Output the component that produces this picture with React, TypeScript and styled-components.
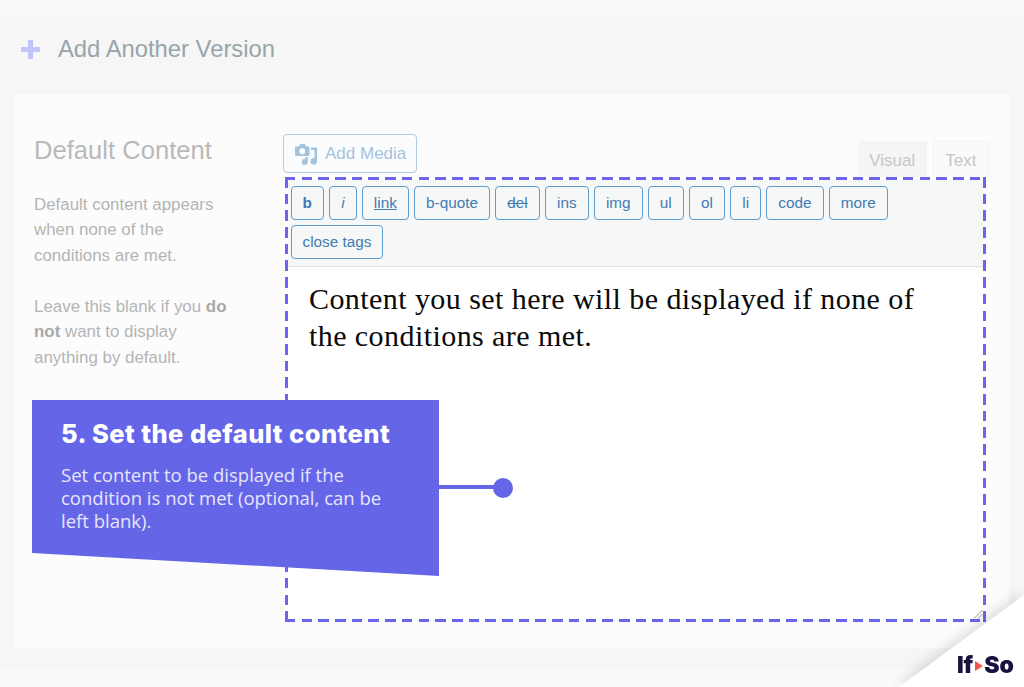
import React from 'react';
import styled, { createGlobalStyle } from 'styled-components';

const GlobalStyle = createGlobalStyle`
  html, body {
    margin: 0;
    padding: 0;
    height: 100%;
    overflow: hidden;
    background: #fafafa;
    font-family: "Liberation Sans", Arial, sans-serif;
  }
`;

const QUICKTAGS = ['b', 'i', 'link', 'b-quote', 'del', 'ins', 'img', 'ul', 'ol', 'li', 'code', 'more', 'close tags'];

const DASH = '#6b64f2 0 10.5px, transparent 10.5px 16.7px';

const Page = styled.div`
  position: relative;
  width: 1024px;
  height: 687px;
  overflow: hidden;
  padding-top: 17px;
  box-sizing: border-box;
`;

const Shell = styled.div`
  height: 652px;
  background: #f6f6f6;
  padding: 0 15px 0 14px;
  box-sizing: border-box;
`;

const AddVersion = styled.div`
  height: 78px;
  display: flex;
  align-items: center;
  gap: 18px;
  padding: 0 0 14px 7px;
  box-sizing: border-box;
  font-size: 23.8px;
  color: #97a5aa;
`;

const Card = styled.section`
  height: 553px;
  background: #fcfcfc;
  box-sizing: border-box;
  padding: 39px 20px 0 20px;
  display: grid;
  grid-template-columns: 249px 1fr;
`;

const Side = styled.div`
  color: #b4b4b4;
  font-size: 16.9px;
  line-height: 25.5px;
`;

const SideTitle = styled.h2`
  margin: 0 0 25.5px;
  font-size: 25.6px;
  font-weight: 400;
  line-height: 32px;
  color: #b9b9b9;
`;

const SideText = styled.p`
  margin: 0 0 25.5px;
  b {
    color: #a9a9a9;
  }
`;

const EditorColumn = styled.div`
  display: flex;
  flex-direction: column;
`;

const EditorHead = styled.div`
  height: 43px;
  display: flex;
  justify-content: space-between;
`;

const MediaButton = styled.button`
  width: 134px;
  height: 39px;
  display: flex;
  align-items: center;
  gap: 8px;
  padding: 0 0 0 11px;
  background: #fbfcfd;
  border: 1px solid #abcde5;
  border-radius: 4px;
  box-sizing: border-box;
  font: 17px "Liberation Sans", Arial, sans-serif;
  color: #a6c3dc;
`;

const Tabs = styled.div`
  display: flex;
  align-items: flex-end;
  gap: 6px;
`;

const Tab = styled.div<{ $active?: boolean }>`
  height: 36px;
  padding: 2px ${(p) => (p.$active ? 10.5 : 11.5)}px 0;
  display: flex;
  align-items: center;
  box-sizing: border-box;
  font-size: 17px;
  color: #c6c6c6;
  background: ${(p) => (p.$active ? '#f5f5f5' : '#fafafa')};
  border: 1px solid #f4f4f4;
  border-bottom: 0;
`;

const Editor = styled.div`
  height: 445px;
  margin: 0 3px 0 2px;
  padding: 3px;
  box-sizing: border-box;
  background: #fff;
  position: relative;
  &::after {
    content: '';
    position: absolute;
    inset: 0;
    pointer-events: none;
    background-image:
      repeating-linear-gradient(90deg, ${DASH}),
      repeating-linear-gradient(90deg, ${DASH}),
      repeating-linear-gradient(180deg, ${DASH}),
      repeating-linear-gradient(180deg, ${DASH});
    background-size: 100% 3px, 100% 3px, 3px 100%, 3px 100%;
    background-position: 0 0, 0 100%, 0 0, 100% 0;
    background-repeat: no-repeat;
  }
`;

const Toolbar = styled.div`
  height: 87px;
  box-sizing: border-box;
  padding: 6px 90px 0 2.5px;
  background: #f6f7f7;
  border-bottom: 1px solid #dfe0e0;
  display: flex;
  flex-wrap: wrap;
  align-content: flex-start;
  gap: 5px 5.3px;
`;

const TagButton = styled.button<{ $tag: string }>`
  height: 34px;
  padding: 0 11px;
  min-width: ${(p) => (p.$tag === 'b' ? 33 : p.$tag === 'i' ? 27 : 0)}px;
  background: #f6f7f7;
  border: 1px solid #5c9dcf;
  border-radius: 4px;
  box-sizing: border-box;
  font-family: "Liberation Sans", Arial, sans-serif;
  font-size: 15.3px;
  color: #3f7cb3;
  font-weight: ${(p) => (p.$tag === 'b' ? 700 : 400)};
  font-style: ${(p) => (p.$tag === 'i' ? 'italic' : 'normal')};
  text-decoration: ${(p) => (p.$tag === 'link' ? 'underline' : p.$tag === 'del' ? 'line-through' : 'none')};
`;

const EditorText = styled.div`
  padding: 13px 40px 0 21px;
  font-family: "Liberation Serif", "Times New Roman", serif;
  font-size: 30px;
  letter-spacing: 0.43px;
  line-height: 37px;
  color: #0a0a0a;
`;

const ResizeHandle = styled.svg`
  position: absolute;
  right: 3px;
  bottom: 3px;
`;

const Callout = styled.aside`
  position: absolute;
  left: 32px;
  top: 400px;
  width: 482px;
  height: 176px;
`;

const CalloutBody = styled.div`
  width: 407px;
  height: 176px;
  box-sizing: border-box;
  padding: 18px 30px 0 29px;
  background: #6565e8;
  clip-path: polygon(0 0, 100% 0, 100% 100%, 0 153px);
  color: #fff;
`;

const CalloutTitle = styled.h3`
  margin: 0 0 13px;
  font-family: Inter, "Noto Sans", sans-serif;
  font-weight: 800;
  font-size: 25.5px;
  line-height: 32px;
  letter-spacing: 0.45px;
`;

const CalloutText = styled.p`
  margin: 0;
  font-family: "Open Sans", "Noto Sans", sans-serif;
  font-size: 18.5px;
  line-height: 23px;
  color: #e6e6fb;
`;

const Connector = styled.div`
  position: absolute;
  left: 407px;
  top: 85px;
  width: 60px;
  height: 4px;
  background: #6565e8;
  &::after {
    content: '';
    position: absolute;
    right: -14px;
    top: -7px;
    width: 20px;
    height: 20px;
    border-radius: 50%;
    background: #6565e8;
  }
`;

const CornerFold = styled.div`
  position: absolute;
  right: 0;
  bottom: 0;
  width: 125px;
  height: 92px;
  filter: drop-shadow(-3px -3px 6px rgba(0, 0, 0, 0.12));
`;

const CornerPaper = styled.div`
  width: 100%;
  height: 100%;
  background: #fff;
  clip-path: polygon(100% 0, 100% 100%, 0 100%);
`;

const Logo = styled.div`
  position: absolute;
  right: 10px;
  bottom: 10px;
  display: flex;
  align-items: center;
  font-family: Inter, "Noto Sans", sans-serif;
  font-weight: 900;
  font-size: 23px;
  line-height: 24px;
  color: #1b1140;
`;

const LogoArrow = styled.span`
  width: 0;
  height: 0;
  margin: 1px 1px 0 2px;
  border-left: 8px solid #f2544f;
  border-top: 5px solid transparent;
  border-bottom: 5px solid transparent;
`;

const PlusIcon = () => (
  <svg width="19" height="19" viewBox="0 0 19 19">
    <path d="M7 0h5v7h7v5h-7v7H7v-7H0V7h7z" fill="#c1c4fb" />
  </svg>
);

const MediaIcon = () => (
  <svg width="22" height="22" viewBox="0 0 22 22" fill="#a3c3dc">
    <path
      fillRule="evenodd"
      d="M1.500 3.500H3.800L5 1h5l1.200 2.500h1.800c.8 0 1.500.7 1.500 1.500v6.500c0 .8-.7 1.500-1.500 1.500H1.500C.7 13 0 12.300 0 11.500V5c0-.8.7-1.500 1.500-1.500zM7.300 5.200a3 3 0 1 0 0 6 3 3 0 0 0 0-6z"
    />
    <path d="M16 4.500h6v13.800a3.200 3.200 0 1 1-2.500-3.100V7h-3.500z" />
    <path d="M10.500 14h2.300v4.800a3 3 0 1 1-2.300-2.900z" />
  </svg>
);

const App = () => (
  <Page>
    <GlobalStyle />
    <Shell>
      <AddVersion>
        <PlusIcon />
        Add Another Version
      </AddVersion>
      <Card>
        <Side>
          <SideTitle>Default Content</SideTitle>
          <SideText>
            Default content appears
            <br />
            when none of the
            <br />
            conditions are met.
          </SideText>
          <SideText>
            Leave this blank if you <b>do</b>
            <br />
            <b>not</b> want to display
            <br />
            anything by default.
          </SideText>
        </Side>
        <EditorColumn>
          <EditorHead>
            <MediaButton>
              <MediaIcon />
              Add Media
            </MediaButton>
            <Tabs>
              <Tab $active>Visual</Tab>
              <Tab>Text</Tab>
            </Tabs>
          </EditorHead>
          <Editor>
            <Toolbar>
              {QUICKTAGS.map((tag) => (
                <TagButton key={tag} $tag={tag}>
                  {tag}
                </TagButton>
              ))}
            </Toolbar>
            <EditorText>
              Content you set here will be displayed if none of the conditions are met.
            </EditorText>
            <ResizeHandle width="10" height="10" viewBox="0 0 10 10">
              <path d="M1 9.500L9.500 1M5 9.500L9.500 5" stroke="#9a9a9a" strokeWidth="1" />
            </ResizeHandle>
          </Editor>
        </EditorColumn>
      </Card>
    </Shell>
    <Callout>
      <CalloutBody>
        <CalloutTitle>5. Set the default content</CalloutTitle>
        <CalloutText>
          Set content to be displayed if the condition is not met (optional, can be left blank).
        </CalloutText>
      </CalloutBody>
      <Connector />
    </Callout>
    <CornerFold>
      <CornerPaper />
      <Logo>
        If
        <LogoArrow />
        So
      </Logo>
    </CornerFold>
  </Page>
);

export default App;
